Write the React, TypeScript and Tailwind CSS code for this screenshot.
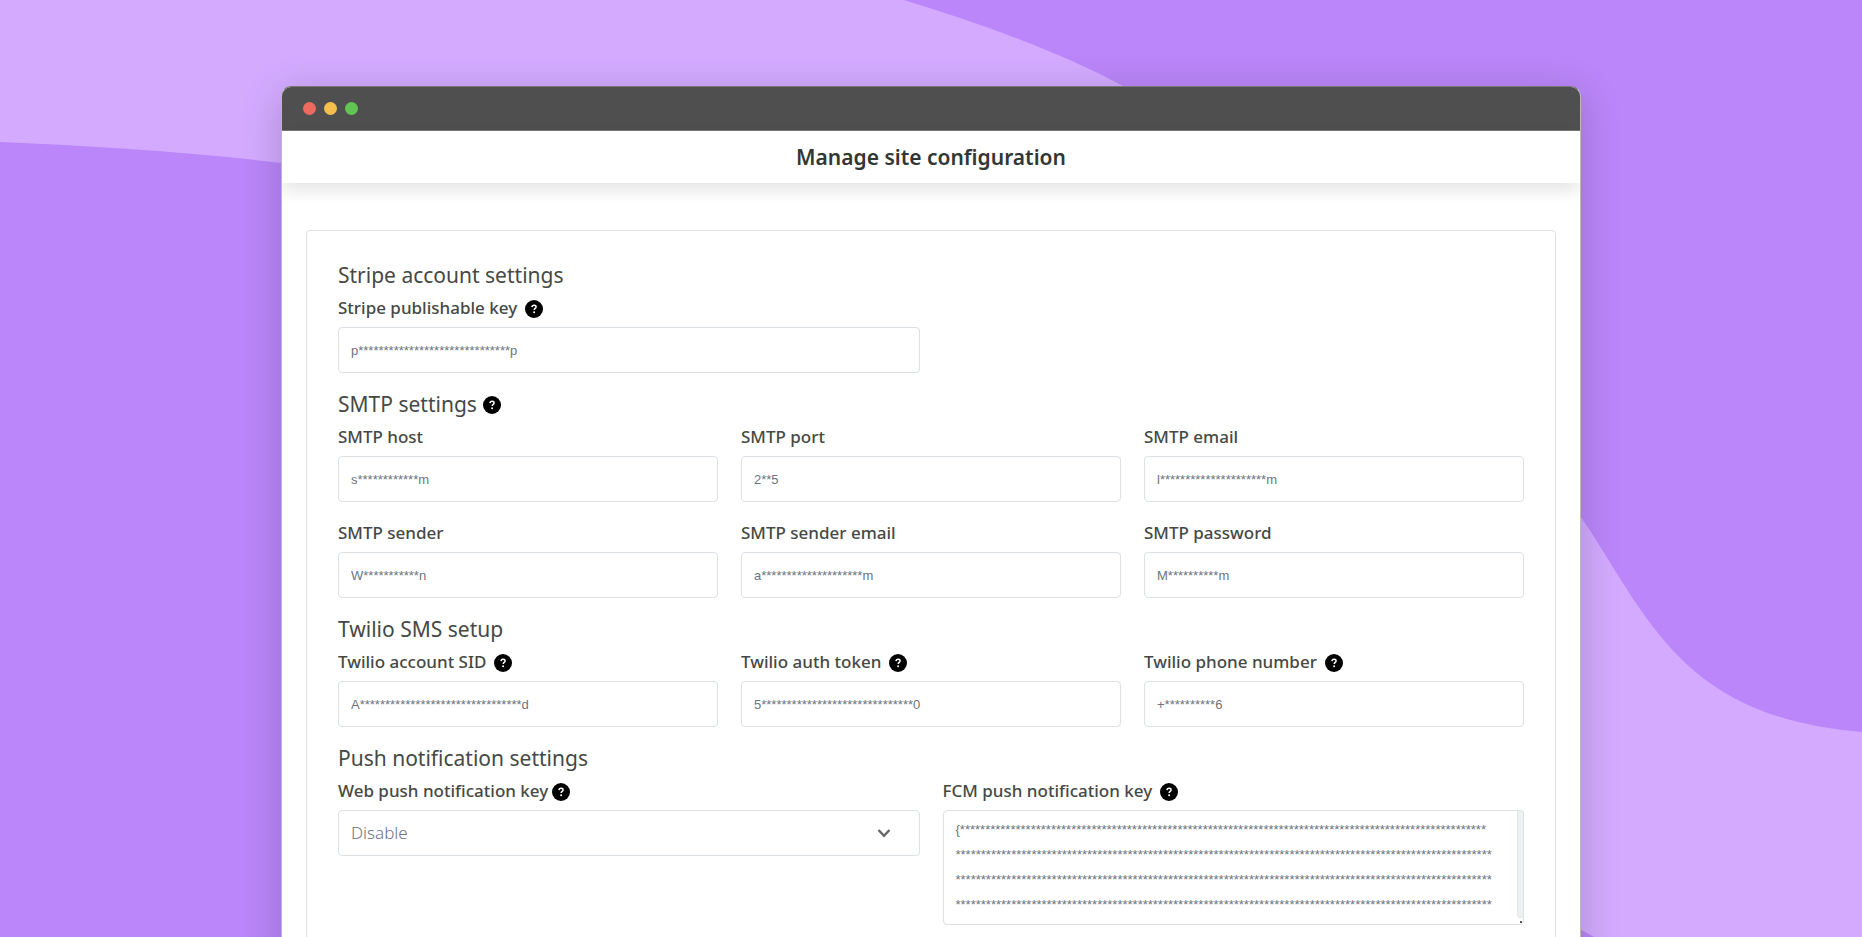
import { useId, useState, type ReactNode } from "react";

const mask = (first: string, count: number, last = "") =>
  first + "*".repeat(count) + last;

const smtpFields = [
  { label: "SMTP host", value: mask("s", 12, "m") },
  { label: "SMTP port", value: mask("2", 2, "5") },
  { label: "SMTP email", value: mask("l", 21, "m") },
  { label: "SMTP sender", value: mask("W", 11, "n") },
  { label: "SMTP sender email", value: mask("a", 20, "m") },
  { label: "SMTP password", value: mask("M", 10, "m") },
];

const twilioFields = [
  { label: "Twilio account SID", value: mask("A", 32, "d") },
  { label: "Twilio auth token", value: mask("5", 30, "0") },
  { label: "Twilio phone number", value: mask("+", 10, "6") },
];

const fcmKey = [
  mask("{", 104),
  mask("", 106),
  mask("", 106),
  mask("", 106),
].join("\n");

function HelpIcon() {
  return (
    <svg viewBox="0 0 18 18" className="mt-0.5 size-[18px] shrink-0" aria-hidden="true">
      <circle cx="9" cy="9" r="9" fill="#000" />
      <path
        d="M7 7.1C7.1 5.8 8 5.2 9.1 5.2c1.2 0 2 .7 2 1.7 0 1.5-1.9 1.5-1.9 3.1"
        fill="none"
        stroke="#fff"
        strokeWidth="1.5"
      />
      <circle cx="9.1" cy="12.3" r="1" fill="#fff" />
    </svg>
  );
}

function Background() {
  return (
    <svg
      viewBox="0 0 1862 937"
      preserveAspectRatio="none"
      className="absolute inset-0 h-full w-full"
      aria-hidden="true"
    >
      <rect width="1862" height="937" fill="#ba86f9" />
      <path
        d="M0 0H904C985 25 1060 52 1123 86L1123 400L281 163C190 152 95 146 0 142Z"
        fill="#d3aaff"
      />
      <path
        d="M1560 485L1581 517C1650 620 1682 717 1862 732V937H1594L1560 918Z"
        fill="#d3aaff"
      />
    </svg>
  );
}

function Section({
  title,
  help,
  children,
}: {
  title: string;
  help?: boolean;
  children: ReactNode;
}) {
  return (
    <section>
      <h2 className="mb-[11px] flex h-6 items-center gap-1.5 text-[21px] leading-6 text-[#454945]">
        {title}
        {help && <HelpIcon />}
      </h2>
      {children}
    </section>
  );
}

function FieldLabel({
  id,
  label,
  help,
  tight,
}: {
  id: string;
  label: string;
  help?: boolean;
  tight?: boolean;
}) {
  return (
    <label
      htmlFor={id}
      className={`mb-[9px] flex h-5 items-center text-[17px] leading-5 font-medium text-[#454945] ${
        tight ? "gap-1" : "gap-2"
      }`}
    >
      {label}
      {help && <HelpIcon />}
    </label>
  );
}

function TextField({ label, value, help }: { label: string; value: string; help?: boolean }) {
  const id = useId();
  const [text, setText] = useState(value);

  return (
    <div>
      <FieldLabel id={id} label={label} help={help} />
      <input
        id={id}
        type="text"
        value={text}
        onChange={(e) => setText(e.target.value)}
        className="block h-[46px] w-full rounded border border-[#dce1e5] bg-white px-3 font-['Liberation_Sans',sans-serif] text-[13px] text-[#6c757d] outline-none focus:border-[#bb86fc]"
      />
    </div>
  );
}

export default function App() {
  const webPushId = useId();
  const fcmId = useId();
  const [webPush, setWebPush] = useState("Disable");
  const [fcm, setFcm] = useState(fcmKey);

  return (
    <main className="relative h-screen overflow-hidden bg-[#ba86f9] font-['Noto_Sans',sans-serif]">
      <Background />

      <div className="relative mx-auto mt-[86px] w-full max-w-[1300px] overflow-hidden rounded-t-[10px] border border-[#b9b9bd] border-t-[#777] bg-white shadow-[0_8px_40px_rgba(0,0,0,0.18)]">
        {/* Title bar */}
        <div className="flex h-11 items-center gap-2 border-b border-[#777] bg-[#4f4f4f] px-[21px]">
          <span className="size-[13px] rounded-full bg-[#ed6a5e]" />
          <span className="size-[13px] rounded-full bg-[#f5bf4f]" />
          <span className="size-[13px] rounded-full bg-[#61c554]" />
        </div>

        <header className="flex h-[52px] items-center justify-center shadow-[0_8px_16px_rgba(0,0,0,0.1)]">
          <h1 className="text-[21px] leading-6 font-semibold text-[#333733]">
            Manage site configuration
          </h1>
        </header>

        <div className="px-6 pt-[47px]">
          <form className="flex flex-col gap-[19px] rounded border border-[#dce1e5] px-[31px] pt-8 pb-16">
            <Section title="Stripe account settings">
              <div className="grid grid-cols-2 gap-x-[23px]">
                <TextField label="Stripe publishable key" value={mask("p", 30, "p")} help />
              </div>
            </Section>

            <Section title="SMTP settings" help>
              <div className="grid grid-cols-3 gap-x-[23px] gap-y-[21px]">
                {smtpFields.map((field) => (
                  <TextField key={field.label} {...field} />
                ))}
              </div>
            </Section>

            <Section title="Twilio SMS setup">
              <div className="grid grid-cols-3 gap-x-[23px]">
                {twilioFields.map((field) => (
                  <TextField key={field.label} {...field} help />
                ))}
              </div>
            </Section>

            <Section title="Push notification settings">
              <div className="grid grid-cols-2 gap-x-[23px]">
                <div>
                  <FieldLabel id={webPushId} label="Web push notification key" help tight />
                  <div className="relative">
                    <select
                      id={webPushId}
                      value={webPush}
                      onChange={(e) => setWebPush(e.target.value)}
                      className="block h-[46px] w-full appearance-none rounded border border-[#dce1e5] bg-white px-3 text-[17px] font-light text-[#6c757d] outline-none"
                    >
                      <option>Disable</option>
                      <option>Enable</option>
                    </select>
                    <svg
                      viewBox="0 0 14 9"
                      className="pointer-events-none absolute top-[19px] right-[29px] h-[9px] w-[14px]"
                      aria-hidden="true"
                    >
                      <path d="M1.5 1L7 6.8 12.5 1" fill="none" stroke="#666" strokeWidth="2.4" />
                    </svg>
                  </div>
                </div>

                <div>
                  <FieldLabel id={fcmId} label="FCM push notification key" help />
                  <div className="relative">
                    <textarea
                      id={fcmId}
                      value={fcm}
                      onChange={(e) => setFcm(e.target.value)}
                      className="block h-[115px] w-full resize-none rounded border border-[#dce1e5] bg-white px-3 py-1.5 font-['Liberation_Sans',sans-serif] text-[13px] leading-[25px] text-[#6c757d] outline-none"
                    />
                    {/* Scroll track with the resize corner under it */}
                    <div className="pointer-events-none absolute top-0 right-0 flex h-full w-[7px] flex-col" aria-hidden="true">
                      <div className="flex-1 rounded-tr rounded-b-sm border border-[#dfe3e6] bg-[#eff1f3]" />
                      <div className="flex h-[7px] items-center justify-center">
                        <span className="size-0.5 bg-[#555]" />
                      </div>
                    </div>
                  </div>
                </div>
              </div>
            </Section>
          </form>
        </div>
      </div>
    </main>
  );
}
